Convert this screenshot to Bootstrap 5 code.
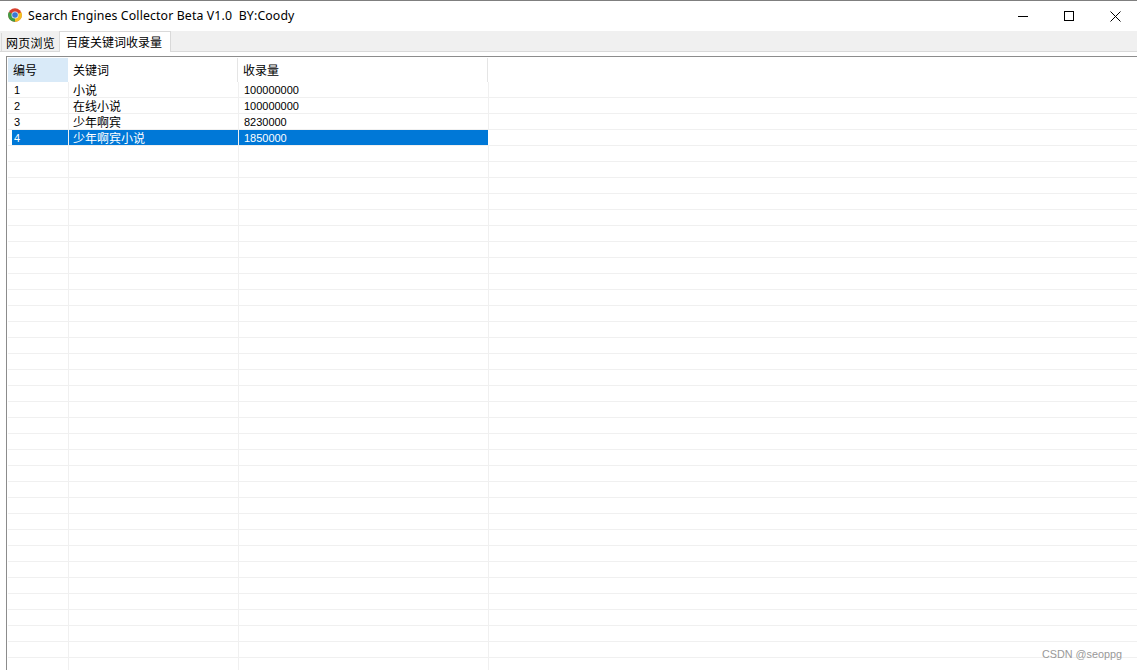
<!DOCTYPE html>
<html lang="zh">
<head>
<meta charset="utf-8">
<title>Search Engines Collector</title>
<link href="https://cdn.jsdelivr.net/npm/bootstrap@5.3.0/dist/css/bootstrap.min.css" rel="stylesheet">
<style>
html,body{height:670px;overflow:hidden;background:#fff}
body{font-family:"Noto Sans","Noto Sans CJK SC",sans-serif;font-size:12px;color:#000;position:relative}
.win-title{height:31px;border-top:1px solid #7f7f7f;padding-left:8px;gap:6px}
.win-icon{margin-top:-2px}
.win-name{font-size:12.3px;letter-spacing:.13px;white-space:pre;line-height:1}
.win-btns{margin-left:auto;margin-right:-1px}
.win-btn{width:46px;height:30px}
.tab-strip{height:21px;background:#f0f0f0;border-bottom:1px solid #d9d9d9;padding-left:1px}
.tab-item{font-family:"Noto Sans CJK SC",sans-serif;font-size:12px;line-height:20px;text-align:center;white-space:nowrap}
.tab-off{width:58px;margin-top:2px;height:18px;line-height:19px;background:#f0f0f0;border-left:1px solid #d9d9d9;letter-spacing:.2px}
.tab-on{width:112px;height:21px;background:#fff;border:1px solid #d9d9d9;border-bottom:0;padding-right:2px}
.grid-pane{margin:4px 0 0 6px;border-top:1px solid #8c8c8c;border-left:1px solid #8c8c8c;height:614px;overflow:hidden}
.grid-head{height:24px;margin-top:1px;margin-left:1px;font-family:"Noto Sans CJK SC",sans-serif;font-size:12px;line-height:24px}
.hc{border-right:1px solid #e5e5e5;padding-left:5px;box-sizing:border-box}
.hc-num{width:60px;background:#d9eaf8;border-right:0}
.hc-key{width:170px}
.hc-cnt{width:250px}
.grid-row{height:16px;margin-left:1px;border-bottom:1px solid #f0f0f0;font-family:"Liberation Sans",sans-serif;font-size:11px;line-height:17px}
.gc{border-right:1px solid #f0f0f0;box-sizing:border-box;height:15px;white-space:nowrap;overflow:hidden}
.c1{width:61px;padding-left:6px}
.c2{width:170px;padding-left:4px;font-family:"Noto Sans CJK SC",sans-serif;font-size:12px;line-height:15px}
.c3{width:250px;padding-left:5px;letter-spacing:-.02px}
.row-sel{background:linear-gradient(#0078d7,#0078d7) 4px 0/476px 15px no-repeat;color:#fff}
.row-sel .c3{border-right-color:#fff}
.watermark{position:absolute;right:15px;bottom:9px;font-family:"Liberation Sans",sans-serif;font-size:10.8px;color:#999;line-height:14px}
</style>
</head>
<body>
<div class="win-title d-flex align-items-center">
  <svg class="win-icon" width="14" height="14" viewBox="0 0 14 14" aria-hidden="true">
    <circle cx="7" cy="7" r="6.8" fill="#d8412f"/>
    <path d="M7 7 L13.3 4.2 A6.8 6.8 0 0 1 7 13.8 Z" fill="#f4c020"/>
    <path d="M7 7 L7 13.8 A6.8 6.8 0 0 1 .8 4 Z" fill="#3f9c45"/>
    <circle cx="7" cy="7" r="3.5" fill="#e8f0f8"/>
    <circle cx="7" cy="7" r="2.8" fill="#3b78d4"/>
  </svg>
  <span class="win-name">Search Engines Collector Beta V1.0  BY:Coody</span>
  <div class="win-btns d-flex">
    <div class="win-btn d-flex align-items-center justify-content-center"><svg width="11" height="11" viewBox="0 0 11 11"><path d="M0 5.5H10" stroke="#000" fill="none"/></svg></div>
    <div class="win-btn d-flex align-items-center justify-content-center"><svg width="11" height="11" viewBox="0 0 11 11"><rect x=".5" y=".5" width="9" height="9" stroke="#000" fill="none"/></svg></div>
    <div class="win-btn d-flex align-items-center justify-content-center"><svg width="11" height="11" viewBox="0 0 11 11"><path d="M.5 .5L10.5 10.5M10.5 .5L.5 10.5" stroke="#000" fill="none"/></svg></div>
  </div>
</div>
<div class="tab-strip d-flex">
  <div class="tab-item tab-off">网页浏览</div>
  <div class="tab-item tab-on">百度关键词收录量</div>
</div>
<div class="grid-pane">
  <div class="grid-head d-flex"><div class="hc hc-num">编号</div><div class="hc hc-key">关键词</div><div class="hc hc-cnt">收录量</div></div>
  <div class="grid-row d-flex"><div class="gc c1">1</div><div class="gc c2">小说</div><div class="gc c3">100000000</div></div>
  <div class="grid-row d-flex"><div class="gc c1">2</div><div class="gc c2">在线小说</div><div class="gc c3">100000000</div></div>
  <div class="grid-row d-flex"><div class="gc c1">3</div><div class="gc c2">少年啊宾</div><div class="gc c3">8230000</div></div>
  <div class="grid-row row-sel d-flex"><div class="gc c1">4</div><div class="gc c2">少年啊宾小说</div><div class="gc c3">1850000</div></div>
  <div id="blank-rows"></div>
</div>
<div class="watermark">CSDN @seoppg</div>
<script>
var h='';
for(var i=0;i<33;i++){h+='<div class="grid-row d-flex"><div class="gc c1"></div><div class="gc c2"></div><div class="gc c3"></div></div>';}
document.getElementById('blank-rows').innerHTML=h;
</script>
<script src="https://cdn.jsdelivr.net/npm/bootstrap@5.3.0/dist/js/bootstrap.bundle.min.js"></script>
</body>
</html>
